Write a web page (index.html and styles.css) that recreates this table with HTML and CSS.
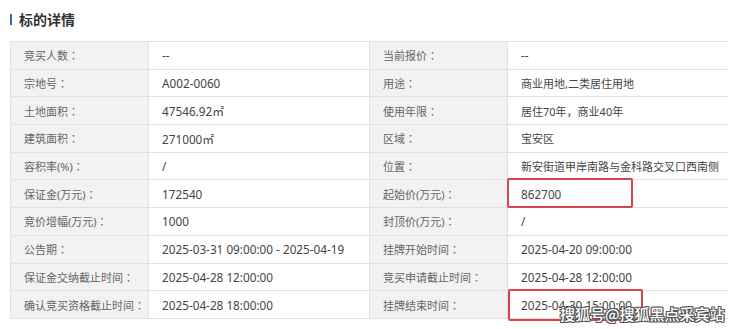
FILE: index.html
```html
<!DOCTYPE html>
<html lang="zh-CN">
<head>
<meta charset="utf-8">
<title>标的详情</title>
<link rel="stylesheet" href="styles.css">
</head>
<body>
<div class="page">
  <h2 class="title"><span class="bar"></span>标的详情</h2>
  <div class="grid">
    <div class="lb">竞买人数<span class="c">：</span></div><div class="val">--</div><div class="lb">当前报价<span class="c">：</span></div><div class="val">--</div>
    <div class="lb">宗地号<span class="c">：</span></div><div class="val">A002-0060</div><div class="lb">用途<span class="c">：</span></div><div class="val cn">商业用地,二类居住用地</div>
    <div class="lb">土地面积<span class="c">：</span></div><div class="val">47546.92㎡</div><div class="lb">使用年限<span class="c">：</span></div><div class="val cn">居住70年，商业40年</div>
    <div class="lb">建筑面积<span class="c">：</span></div><div class="val">271000㎡</div><div class="lb">区域<span class="c">：</span></div><div class="val cn">宝安区</div>
    <div class="lb">容积率(%)<span class="c">：</span></div><div class="val">/</div><div class="lb">位置<span class="c">：</span></div><div class="val cn">新安街道甲岸南路与金科路交叉口西南侧</div>
    <div class="lb">保证金(万元)<span class="c">：</span></div><div class="val">172540</div><div class="lb">起始价(万元)<span class="c">：</span></div><div class="val mark"><span class="box box1"></span>862700</div>
    <div class="lb">竞价增幅(万元)<span class="c">：</span></div><div class="val">1000</div><div class="lb">封顶价(万元)<span class="c">：</span></div><div class="val">/</div>
    <div class="lb">公告期<span class="c">：</span></div><div class="val">2025-03-31 09:00:00 - 2025-04-19</div><div class="lb">挂牌开始时间<span class="c">：</span></div><div class="val">2025-04-20 09:00:00</div>
    <div class="lb">保证金交纳截止时间<span class="c">：</span></div><div class="val">2025-04-28 12:00:00</div><div class="lb">竞买申请截止时间<span class="c">：</span></div><div class="val">2025-04-28 12:00:00</div>
    <div class="lb">确认竞买资格截止时间<span class="c">：</span></div><div class="val">2025-04-28 18:00:00</div><div class="lb">挂牌结束时间<span class="c">：</span></div><div class="val mark"><span class="box box2"></span>2025-04-30 15:00:00</div>
  </div>
  <div class="watermark">搜狐号@搜狐黑点采宾站</div>
</div>
</body>
</html>
```
FILE: styles.css
```css
html, body {
  margin: 0;
  padding: 0;
  background: #fff;
}
.page {
  position: relative;
  width: 740px;
  height: 329px;
  overflow: hidden;
  font-family: "Noto Sans", "Noto Sans CJK SC", sans-serif;
}
.title {
  display: flex;
  align-items: center;
  gap: 7px;
  margin: 0;
  padding: 10px 0 0 10px;
  height: 19px;
  font-size: 14px;
  font-weight: 700;
  color: #333;
  line-height: 19px;
}
.bar {
  display: block;
  width: 2px;
  height: 11px;
  background: #2f6db5;
}
.grid {
  margin: 12px 0 0 10px;
  width: 719px;
  box-sizing: border-box;
  display: grid;
  grid-template-columns: 137px 220px 137px 221px;
  grid-auto-rows: 26.7px;
  gap: 1px;
  padding: 1px;
  background: #e1e1e1;
}
.lb, .val {
  display: flex;
  align-items: center;
  padding-left: 13px;
  white-space: nowrap;
  overflow: visible;
}
.lb {
  background: #f2f2f2;
  color: #666;
  font-size: 11px;
}
.c {
  font-family: "Noto Sans CJK TC", sans-serif;
}
.val {
  background: #fff;
  color: #444;
  font-size: 11.75px;
}
.val.cn {
  font-size: 11px;
}
.mark {
  position: relative;
}
.box {
  position: absolute;
  border: 2px solid #d8434a;
  border-radius: 2px;
  box-sizing: border-box;
}
.box1 {
  left: -1px;
  top: -2px;
  width: 126px;
  height: 30px;
}
.box2 {
  left: 0;
  top: -2px;
  width: 135px;
  height: 32px;
}
.watermark {
  position: absolute;
  left: 560px;
  top: 304px;
  font-family: "Noto Sans CJK SC", sans-serif;
  font-size: 15px;
  line-height: 20px;
  font-weight: 500;
  color: #fff;
  text-shadow: -1px -1px 0 #555, 1px -1px 0 #555, -1px 1px 0 #555, 1px 1px 0 #555, 0 1px 0 #555, 1px 0 0 #555, 0 -1px 0 #555, -1px 0 0 #555;
}
```
